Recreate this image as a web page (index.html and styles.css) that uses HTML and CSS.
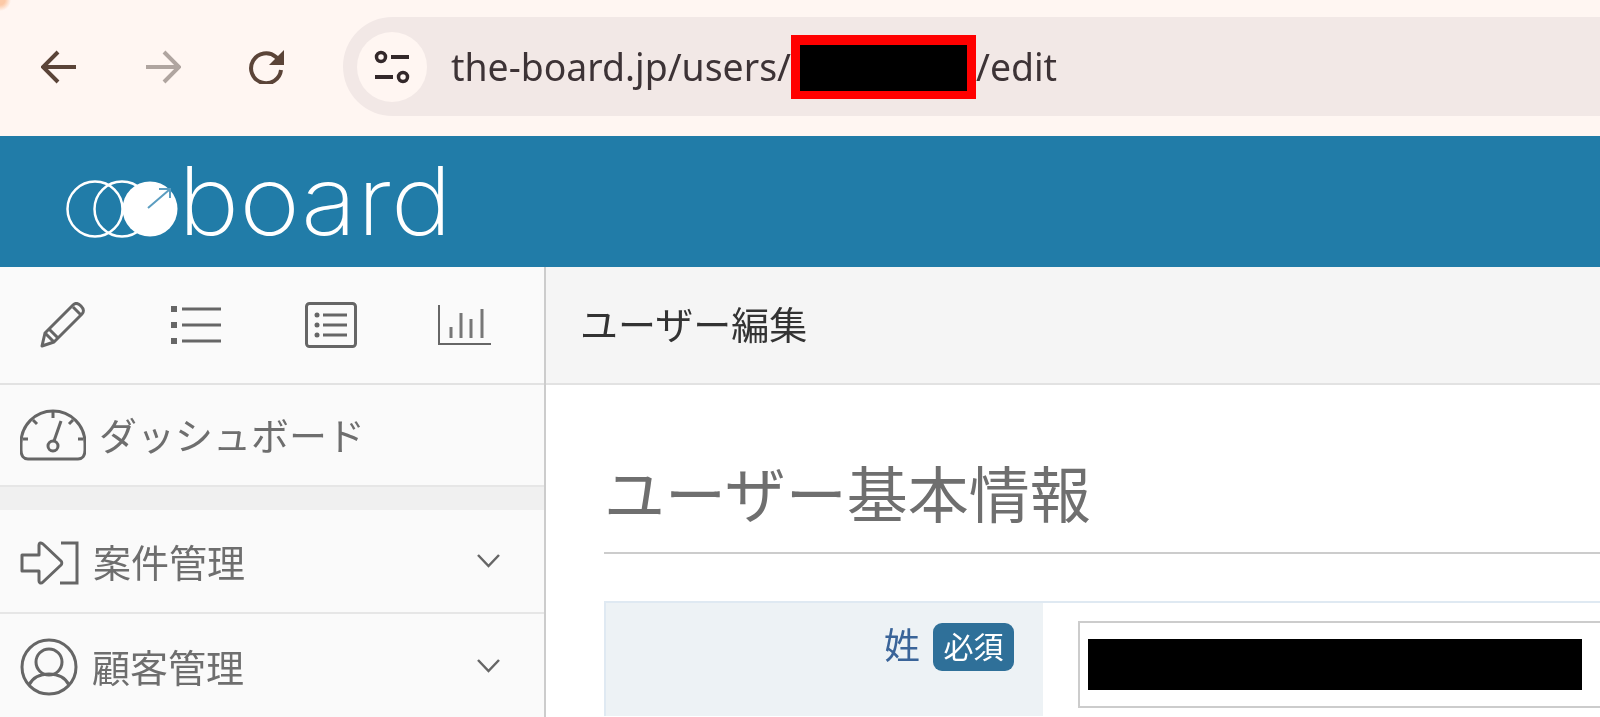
FILE: index.html
```html
<!DOCTYPE html>
<html lang="ja">
<head>
    <meta charset="UTF-8">
    <title>ユーザー編集</title>
    <link rel="stylesheet" href="styles.css">
</head>
<body>
    <div class="browser-bar">
        <div class="nav-buttons">
            <svg class="nav-icon" viewBox="0 0 36 34"><path d="M35 17H3M17 2 2 17l15 15" fill="none" stroke="#5b4438" stroke-width="4"/></svg>
            <svg class="nav-icon nav-disabled" viewBox="0 0 36 34"><path d="M1 17h32M19 2l15 15-15 15" fill="none" stroke="#b0a5a0" stroke-width="4"/></svg>
            <svg class="nav-icon" viewBox="0 0 36 34"><path d="M32 20a15 15 0 1 1-5-13l6 6" fill="none" stroke="#5b4438" stroke-width="4"/><path d="M35 0v15H20z" fill="#5b4438"/></svg>
        </div>
        <div class="address-bar">
            <div class="site-info">
                <svg class="tune-icon" viewBox="0 0 36 34"><circle cx="7" cy="7" r="4.500" fill="none" stroke="#33282a" stroke-width="3.500"/><path d="M17 7h18M1 27h18" stroke="#33282a" stroke-width="4"/><circle cx="29" cy="27" r="4.500" fill="none" stroke="#33282a" stroke-width="3.500"/></svg>
            </div>
            <div class="url">
                <span class="url-text">the-board.jp/users/</span><span class="redacted-url"></span><span class="url-text">/edit</span>
            </div>
        </div>
    </div>

    <header class="site-header">
        <svg class="logo" viewBox="-3 -30 420 131">
            <g fill="none" stroke="#fff" stroke-width="2.500">
                <circle cx="28" cy="43" r="27.500"/>
                <circle cx="55" cy="43" r="27.500"/>
            </g>
            <circle cx="83" cy="43" r="27.500" fill="#fff"/>
            <path d="M81 42 102 24M92 23h11v9" fill="none" stroke="#5b9dc0" stroke-width="2"/>
            <text class="logo-text" x="111" y="69" textLength="274" lengthAdjust="spacingAndGlyphs">board</text>
        </svg>
    </header>

    <div class="layout">
        <aside class="sidebar">
            <div class="tool-tabs">
                <svg class="tool-icon" viewBox="0 0 46 46"><g fill="none" stroke="#666" stroke-width="3" stroke-linejoin="round"><path d="M2 44l3-13L33 3c2-2 5-2 8 1s3 6 1 8L14 40z"/><path d="M5 31l9 9M9 27l9 9M33 5l8 8"/></g></svg>
                <svg class="tool-icon" viewBox="0 0 50 38"><g fill="#666"><rect x="0" y="0" width="6" height="6"/><rect x="0" y="16" width="6" height="6"/><rect x="0" y="32" width="6" height="6"/></g><path d="M11 3h39M11 19h39M11 35h39" stroke="#666" stroke-width="3"/></svg>
                <svg class="tool-icon" viewBox="0 0 52 46"><rect x="1.500" y="1.500" width="49" height="43" rx="3" fill="none" stroke="#666" stroke-width="3"/><g fill="#666"><circle cx="12" cy="13" r="2.500"/><circle cx="12" cy="23" r="2.500"/><circle cx="12" cy="33" r="2.500"/></g><path d="M18 13h24M18 23h24M18 33h24" stroke="#666" stroke-width="3"/></svg>
                <svg class="tool-icon" viewBox="0 0 53 40"><path d="M1 0v39h52" fill="none" stroke="#666" stroke-width="2"/><path d="M13 22v11M23 8v25M33 14v19M44 4v29" stroke="#777" stroke-width="3"/></svg>
            </div>
            <div class="side-item side-dashboard">
                <svg class="gauge-icon" viewBox="0 0 66 52"><g fill="none" stroke="#666" stroke-width="3"><path d="M8 50c-4 0-7-3-7-9v-7a32 32 0 0 1 64 0v7c0 6-3 9-7 9z"/><circle cx="33" cy="37" r="5"/><path d="M34 32l7-20"/><path d="M33 3v6M13 11l4 4M53 11l-4 4M3 30h5M63 30h-5"/></g></svg>
                <span class="side-text">ダッシュボード</span>
            </div>
            <div class="side-gap"></div>
            <div class="side-item">
                <svg class="login-icon" viewBox="0 0 59 44"><g fill="none" stroke="#666" stroke-width="3"><path d="M2 14h17V4c0-2 2-3 4-1l18 17c1 1 1 3 0 4L23 41c-2 2-4 1-4-1V30H2z" stroke-linejoin="round"/><path d="M41 2h16v40H40"/></g></svg>
                <span class="side-text">案件管理</span>
                <svg class="chevron" viewBox="0 0 23 14"><path d="M1 1l10.500 11L22 1" fill="none" stroke="#666" stroke-width="2.500"/></svg>
            </div>
            <div class="side-item side-last">
                <svg class="user-icon" viewBox="0 0 58 58"><g fill="none" stroke="#666" stroke-width="3"><circle cx="29" cy="29" r="27"/><circle cx="29" cy="24" r="13"/><path d="M9 47c4-8 12-11 20-11s16 3 20 11"/></g></svg>
                <span class="side-text">顧客管理</span>
                <svg class="chevron" viewBox="0 0 23 14"><path d="M1 1l10.500 11L22 1" fill="none" stroke="#666" stroke-width="2.500"/></svg>
            </div>
        </aside>

        <main class="main">
            <div class="page-bar"><span class="page-bar-text">ユーザー編集</span></div>
            <div class="content">
                <h1 class="section-title"><span class="section-title-text">ユーザー基本情報</span></h1>
                <div class="form-row">
                    <div class="form-label">
                        <span class="label-text">姓</span>
                        <span class="badge"><span class="badge-text">必須</span></span>
                    </div>
                    <div class="form-field">
                        <div class="text-input"><div class="redacted-input"></div></div>
                    </div>
                </div>
            </div>
        </main>
    </div>
</body>
</html>
```

FILE: styles.css
```css
* {
    margin: 0;
    padding: 0;
    box-sizing: border-box;
}

html,
body {
    height: 717px;
    overflow: hidden;
}

body {
    font-family: "Noto Sans", "Noto Sans CJK JP", sans-serif;
    background: white;
}

/* the screenshot was upscaled, so text and icons are a little soft */
svg,
.url-text,
.side-text,
.page-bar-text,
.section-title-text,
.label-text,
.badge-text {
    filter: blur(0.6px);
}

.browser-bar {
    height: 136px;
    background: radial-gradient(circle at 0 0, #fcc9a6 5px, transparent 11px), #fff6f2;
    display: flex;
    align-items: flex-start;
    padding-top: 17px;
}

.nav-buttons {
    width: 343px;
    height: 99px;
    display: flex;
    align-items: center;
    gap: 68px;
    padding-left: 41px;
}

.nav-icon {
    width: 36px;
    height: 34px;
}

.address-bar {
    flex: 1;
    height: 99px;
    background: #f2e8e6;
    border-radius: 50px 0 0 50px;
    display: flex;
    align-items: center;
    padding-left: 14px;
}

.site-info {
    width: 70px;
    height: 70px;
    border-radius: 50%;
    background: #fff6f2;
    display: flex;
    align-items: center;
    justify-content: center;
}

.tune-icon {
    width: 36px;
    height: 34px;
}

.url {
    display: flex;
    align-items: center;
    margin-left: 24px;
    font-size: 37.4px;
    color: #3d3336;
}

.redacted-url {
    width: 185px;
    height: 64px;
    background: black;
    border: solid red;
    border-width: 10px 9px 8px;
}

.site-header {
    height: 131px;
    background: #217ca8;
    padding-left: 64px;
}

.logo {
    display: block;
    width: 420px;
    height: 131px;
}

.logo-text {
    font-family: Inter, sans-serif;
    font-weight: 200;
    font-size: 95px;
    fill: white;
}

.layout {
    display: flex;
    height: 450px;
    overflow: hidden;
}

.sidebar {
    width: 546px;
    background: #fafafa;
    border-right: 2px solid #ccc;
    color: #6e6e6e;
    font-size: 38px;
    flex-shrink: 0;
}

.tool-tabs {
    height: 118px;
    display: flex;
    align-items: center;
    border-bottom: 2px solid #e2e2e2;
    padding-left: 40px;
}

.tool-icon:nth-child(1) {
    width: 46px;
    height: 46px;
    margin-right: 85px;
}

.tool-icon:nth-child(2) {
    width: 50px;
    height: 38px;
    margin-right: 84px;
}

.tool-icon:nth-child(3) {
    width: 52px;
    height: 46px;
    margin-right: 81px;
}

.tool-icon:nth-child(4) {
    width: 53px;
    height: 40px;
}

.side-item {
    height: 104px;
    display: flex;
    align-items: center;
    padding: 3px 44px 0 20px;
    border-bottom: 2px solid #e6e6e6;
}

.side-text {
    margin-bottom: 4px;
}

.side-dashboard {
    height: 102px;
    padding-top: 0;
}

.side-last {
    height: 103px;
    border-bottom: none;
}

.side-gap {
    height: 23px;
    background: #f0f0f0;
}

.gauge-icon {
    width: 66px;
    height: 52px;
    margin-right: 13px;
}

.login-icon {
    width: 59px;
    height: 44px;
    margin-right: 14px;
}

.user-icon {
    width: 58px;
    height: 58px;
    margin-right: 14px;
}

.chevron {
    width: 23px;
    height: 14px;
    margin-left: auto;
    margin-bottom: 3px;
}

.main {
    flex: 1;
    min-width: 0;
    overflow: hidden;
}

.page-bar {
    height: 118px;
    background: #f5f5f5;
    border-bottom: 2px solid #e2e2e2;
    display: flex;
    align-items: center;
    padding: 0 0 6px 34px;
    font-size: 38px;
    color: #333;
}

.content {
    padding-left: 58px;
}

.section-title {
    height: 169px;
    padding-top: 72px;
    font-size: 61px;
    font-weight: 400;
    line-height: 76px;
    color: #6f6f6f;
    border-bottom: 2px solid #ccc;
    margin-bottom: 47px;
}

.form-row {
    display: flex;
    height: 115px;
    border-top: 2px solid #dfe9f2;
    border-left: 2px solid #dfe9f2;
}

.form-label {
    width: 437px;
    background: #edf2f5;
    display: flex;
    justify-content: flex-end;
    align-items: flex-start;
    gap: 13px;
    padding: 20px 29px 0 0;
}

.label-text {
    font-size: 36px;
    line-height: 46px;
    color: #3a6499;
}

.badge {
    width: 81px;
    height: 48px;
    border-radius: 9px;
    background: #2f7099;
    color: white;
    font-size: 30px;
    text-align: center;
    line-height: 48px;
}

.badge-text {
    display: inline-block;
}

.form-field {
    flex: 1;
    padding: 18px 0 0 35px;
}

.text-input {
    height: 87px;
    margin-right: -10px;
    border: 2px solid #ccc;
    padding: 16px 0 0 8px;
    background: white;
}

.redacted-input {
    width: 494px;
    height: 51px;
    background: black;
}
```
